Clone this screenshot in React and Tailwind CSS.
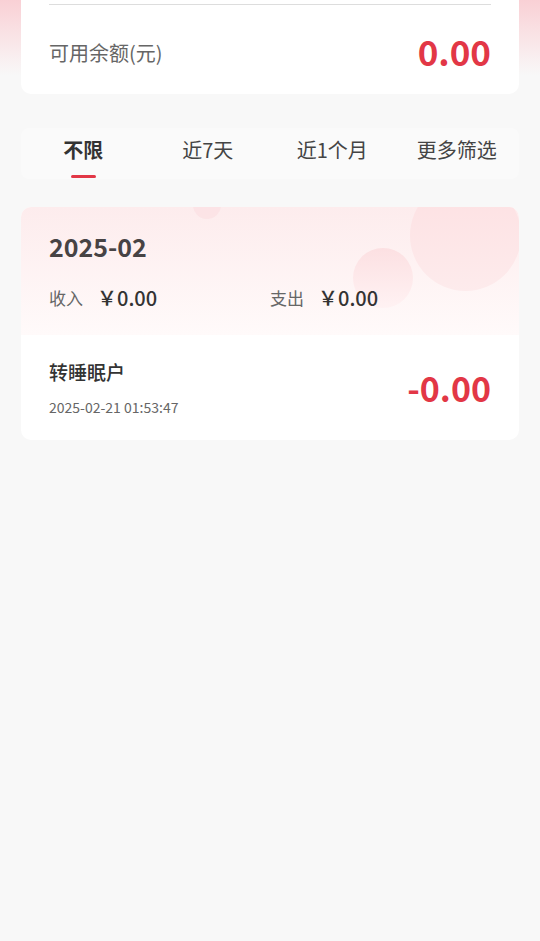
export default function App() {
  const font = { fontFamily: '"Noto Sans CJK SC", "Noto Sans", sans-serif' };
  return (
    <div className="relative min-h-[941px] w-[540px] bg-[#f8f8f8] overflow-hidden" style={font}>
      <div className="absolute inset-x-0 top-0 h-[75px] bg-gradient-to-b from-[#f9d0d5] to-[#f8f8f8]" />
      <div className="relative flex flex-col px-[21px]">
        {/* balance card */}
        <div className="bg-white rounded-b-[10px] px-[28px]">
          <div className="mt-[4px] h-px bg-[#dddddd]" />
          <div className="flex h-[89px] items-center justify-between pt-[6px]">
            <span className="text-[20px] text-[#666666]">可用余额(元)</span>
            <span className="text-[35px] font-semibold text-[#e23746] leading-none mb-[5px]">0.00</span>
          </div>
        </div>

        {/* tabs */}
        <div className="mt-[34px] grid h-[51px] grid-cols-4 rounded-[8px] bg-[#fafafa]">
          {["不限", "近7天", "近1个月", "更多筛选"].map((t, i) => (
            <div key={t} className="relative flex items-center justify-center pb-[8px]">
              <span className={i === 0 ? "text-[20px] font-bold text-[#333333]" : "text-[20px] text-[#444444]"}>{t}</span>
              {i === 0 && (
                <span className="absolute bottom-[1px] h-[3px] w-[25px] rounded-full bg-[#e23746]" />
              )}
            </div>
          ))}
        </div>

        {/* month card */}
        <div className="mt-[28px] overflow-hidden rounded-[10px] bg-white">
          <div className="relative h-[128px] bg-gradient-to-b from-[#fdeced] to-[#fffafa] px-[28px]">
            <div className="absolute left-[172px] top-[-16px] h-[28px] w-[28px] rounded-full bg-[#fbe0e2] opacity-70" />
            <div className="absolute left-[332px] top-[41px] h-[60px] w-[60px] rounded-full bg-gradient-to-b from-[#fce0e2] to-[#fff2f3]" />
            <div className="absolute left-[389px] top-[-27px] h-[111px] w-[111px] rounded-full bg-gradient-to-b from-[#fde0e2] to-[#fdebec]" />
            <div className="relative pt-[20px]">
              <div className="text-[25px] font-semibold text-[#474344] leading-[38px]">2025-02</div>
              <div className="mt-[18px] grid grid-cols-2 items-center">
                <div className="flex items-center">
                  <span className="text-[17px] text-[#666666] w-[48px]">收入</span>
                  <span className="text-[20px] font-medium text-[#333333]">￥0.00</span>
                </div>
                <div className="flex items-center">
                  <span className="text-[17px] text-[#666666] w-[48px]">支出</span>
                  <span className="text-[20px] font-medium text-[#333333]">￥0.00</span>
                </div>
              </div>
            </div>
          </div>
          <div className="flex h-[105px] items-center justify-between px-[28px]">
            <div className="flex flex-col">
              <span className="text-[19px] font-medium text-[#333333] leading-[28px]">转睡眠户</span>
              <span className="mt-[11px] text-[14px] text-[#666666] leading-[20px]">2025-02-21 01:53:47</span>
            </div>
            <span className="text-[34px] font-semibold text-[#e23746] leading-none">-0.00</span>
          </div>
        </div>
      </div>
    </div>
  );
}
